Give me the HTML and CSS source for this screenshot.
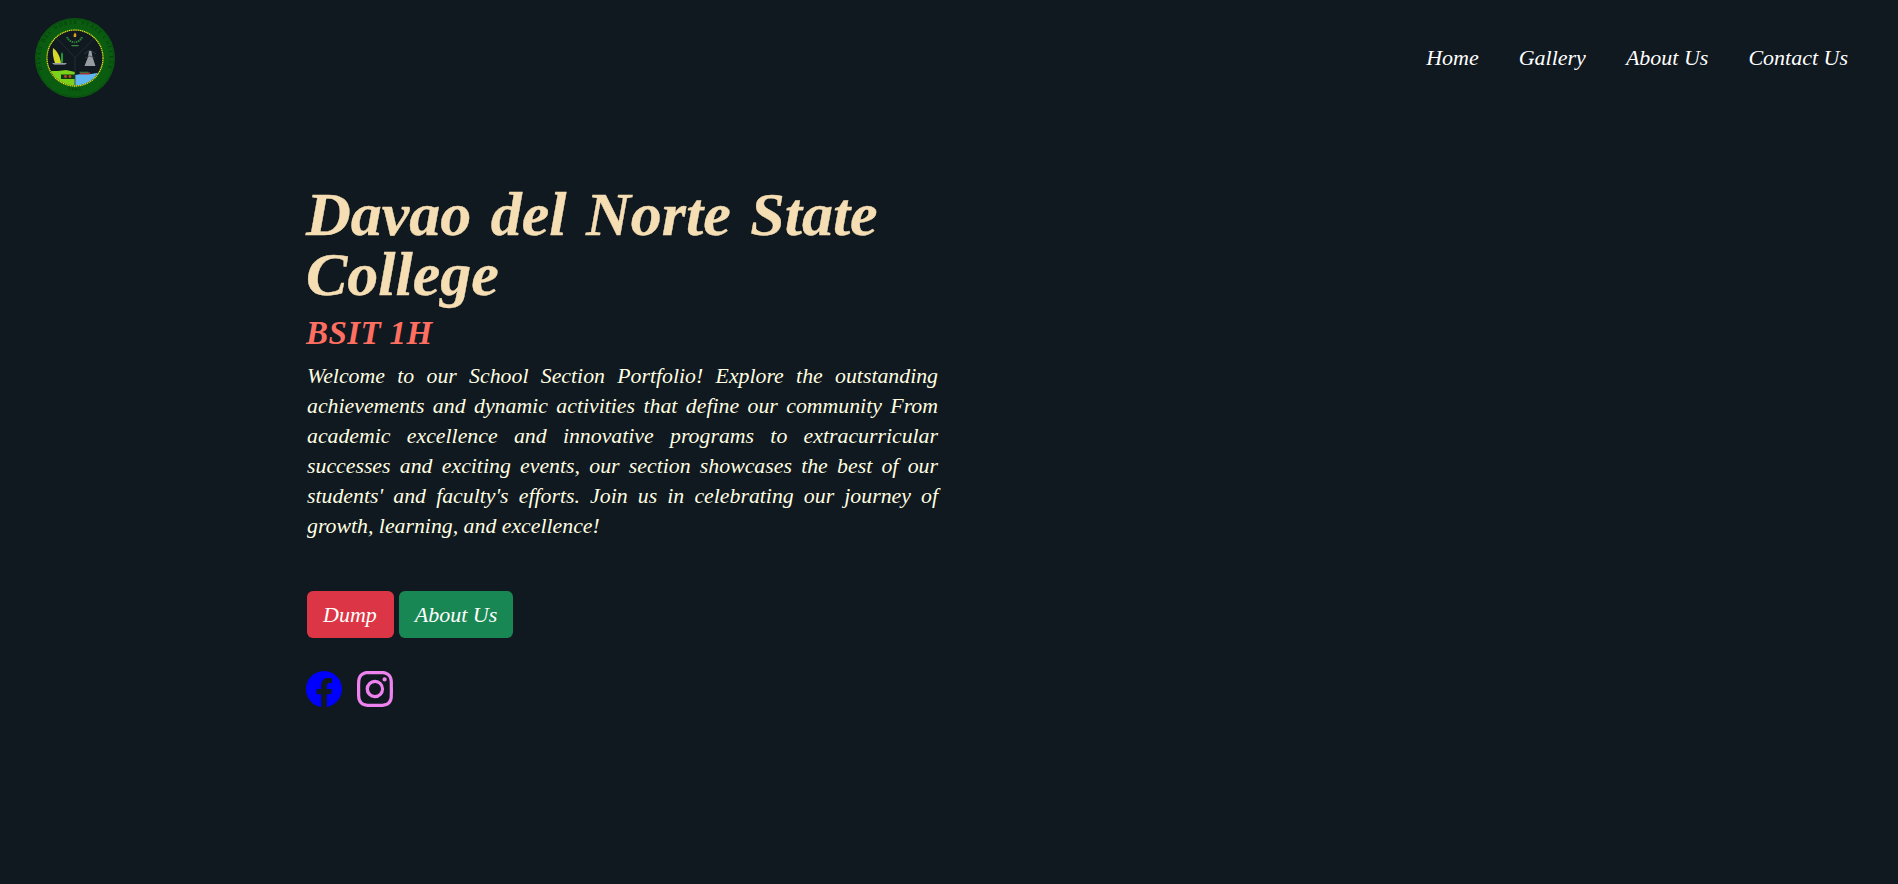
FILE: index.html
```html
<!DOCTYPE html>
<html lang="en">
<head>
<meta charset="utf-8">
<title>BSIT 1H Portfolio</title>
<link rel="stylesheet" href="styles.css">
</head>
<body>
<header class="topbar">
  <a class="logo" href="#" aria-label="Davao del Norte State College seal">
    <svg viewBox="0 0 80 80" width="80" height="80">
      <defs>
        <path id="seal-arc" d="M13.500 62.300a34.500 34.500 0 1 1 53 0"/>
        <path id="seal-arc-low" d="M16 64a36 36 0 0 0 48 0"/>
        <clipPath id="seal-clip"><circle cx="40" cy="40" r="27.500"/></clipPath>
      </defs>
      <circle cx="40" cy="40" r="40" fill="#0a5c10"/>
      <circle cx="40" cy="40" r="38.800" fill="none" stroke="#0b4a10" stroke-width=".8"/>
      <text class="seal-text"><textPath href="#seal-arc" startOffset="50%" text-anchor="middle">DAVAO DEL NORTE STATE COLLEGE</textPath></text>
      <text class="seal-year"><textPath href="#seal-arc-low" startOffset="50%" text-anchor="middle">1995</textPath></text>
      <circle cx="40" cy="40" r="28" fill="#101820"/>
      <g clip-path="url(#seal-clip)">
        <path d="M10 53h13l8-1 9 2v16H10z" fill="#7ad21a"/>
        <path d="M40 57l6-1h10l12-2v16H40z" fill="#5fb6ee"/>
        <path d="M44.500 54.500h11l-.8 2H45.500z" fill="#a53038"/>
        <path d="M44.500 53.800h9v1h-9z" fill="#2f8a3a"/>
        <path d="M26 56.500h14V61H26z" fill="#0d3a14"/>
        <circle cx="30.500" cy="58.500" r="1.400" fill="#c8452c"/>
        <circle cx="35" cy="58.500" r="1.400" fill="#c8452c"/>
        <path d="M40 39.500L20.500 19M40 39.500L59.500 20M40 39.500V70" stroke="#2a333c" stroke-width=".8" fill="none"/>
        <path d="M18 30c3 2 7 7 8 15h-6c-2-5-2.500-10-2-15z" fill="#d8d82a"/>
        <path d="M26 44.800V36l1-2 1 2v8.800z" fill="#1d9a34"/>
        <path d="M17 45.200h15l-2 1.300H19z" fill="#c5c8cc"/>
        <path d="M54 33l2.500 0 1 6 3 9h-11l3.500-9z" fill="#969ca2"/>
        <path d="M49 36l6-4 6 4M50 40l5-2 5 2" stroke="#3f464e" stroke-width=".7" fill="none"/>
        <path d="M32 19a8 8 0 0 0 15 0" fill="none" stroke="#2c8a35" stroke-width="2" stroke-dasharray="1.500 .7"/>
        <path d="M39.500 17h1.200l-.2 9h-.8z" fill="#20262c"/>
        <path d="M40 14.500c1.500 1.500 1.800 3 .8 4.500h-2c-.6-1.500 0-3 1.200-4.500z" fill="#e0a21c"/>
        <path d="M36 27h8l-1 1.200h-6z" fill="#3c8a3c"/>
      </g>
      <circle cx="40" cy="40" r="28" fill="none" stroke="#dfe01e" stroke-width="1.300" stroke-dasharray="1.300 .6"/>
    </svg>
  </a>
  <nav class="nav">
    <a href="#">Home</a>
    <a href="#">Gallery</a>
    <a href="#">About Us</a>
    <a href="#">Contact Us</a>
  </nav>
</header>
<main class="hero">
  <h1 class="title">Davao del Norte State College</h1>
  <h2 class="subtitle">BSIT 1H</h2>
  <p class="intro">
    <span class="line">Welcome to our School Section Portfolio! Explore the outstanding</span>
    <span class="line">achievements and dynamic activities that define our community From</span>
    <span class="line">academic excellence and innovative programs to extracurricular</span>
    <span class="line">successes and exciting events, our section showcases the best of our</span>
    <span class="line">students' and faculty's efforts. Join us in celebrating our journey of</span>
    <span class="line line-last">growth, learning, and excellence!</span>
  </p>
  <div class="actions">
    <a class="btn btn-red" href="#">Dump</a>
    <a class="btn btn-green" href="#">About Us</a>
  </div>
  <div class="socials">
    <a class="fb" href="#" aria-label="Facebook">
      <svg viewBox="0 0 16 16" width="36" height="36" fill="currentColor"><path d="M16 8.049c0-4.446-3.582-8.05-8-8.05C3.58 0-.002 3.603-.002 8.05c0 4.017 2.926 7.347 6.75 7.951v-5.625h-2.03V8.05H6.75V6.275c0-2.017 1.195-3.131 3.022-3.131.876 0 1.791.157 1.791.157v1.98h-1.009c-.993 0-1.303.621-1.303 1.258v1.51h2.218l-.354 2.326H9.25V16c3.824-.604 6.75-3.934 6.75-7.951"/></svg>
    </a>
    <a class="ig" href="#" aria-label="Instagram">
      <svg viewBox="0 0 16 16" width="36" height="36" fill="currentColor"><path d="M8 0C5.829 0 5.556.01 4.703.048 3.85.088 3.269.222 2.76.42a3.9 3.9 0 0 0-1.417.923A3.9 3.9 0 0 0 .42 2.76C.222 3.268.087 3.85.048 4.7.01 5.555 0 5.827 0 8.001c0 2.172.01 2.444.048 3.297.04.852.174 1.433.372 1.942.205.526.478.972.923 1.417.444.445.89.719 1.416.923.51.198 1.09.333 1.942.372C5.555 15.99 5.827 16 8 16s2.444-.01 3.298-.048c.851-.04 1.434-.174 1.943-.372a3.9 3.9 0 0 0 1.416-.923c.445-.445.718-.891.923-1.417.197-.509.332-1.09.372-1.942C15.99 10.445 16 10.173 16 8s-.01-2.445-.048-3.299c-.04-.851-.175-1.433-.372-1.941a3.9 3.9 0 0 0-.923-1.417A3.9 3.9 0 0 0 13.24.42c-.51-.198-1.092-.333-1.943-.372C10.443.01 10.172 0 7.998 0zm-.717 1.442h.718c2.136 0 2.389.007 3.232.046.78.035 1.204.166 1.486.275.373.145.64.319.92.599s.453.546.598.92c.11.281.24.705.275 1.485.039.843.047 1.096.047 3.231s-.008 2.389-.047 3.232c-.035.78-.166 1.203-.275 1.485a2.5 2.5 0 0 1-.599.919c-.28.28-.546.453-.92.598-.28.11-.704.24-1.485.276-.843.038-1.096.047-3.232.047s-2.39-.009-3.233-.047c-.78-.036-1.203-.166-1.485-.276a2.5 2.5 0 0 1-.92-.598 2.5 2.5 0 0 1-.6-.92c-.109-.281-.24-.705-.275-1.485-.038-.843-.046-1.096-.046-3.233s.008-2.388.046-3.231c.036-.78.166-1.204.276-1.486.145-.373.319-.64.599-.92s.546-.453.92-.598c.282-.11.705-.24 1.485-.276.738-.034 1.024-.044 2.515-.045zm4.988 1.328a.96.96 0 1 0 0 1.92.96.96 0 0 0 0-1.92m-4.27 1.122a4.109 4.109 0 1 0 0 8.217 4.109 4.109 0 0 0 0-8.217m0 1.441a2.667 2.667 0 1 1 0 5.334 2.667 2.667 0 0 1 0-5.334"/></svg>
    </a>
  </div>
</main>
</body>
</html>
```

FILE: styles.css
```css
* { box-sizing: border-box; }
html, body { margin: 0; height: 100%; }
body {
  background: #101820;
  font-family: "Liberation Serif", "Times New Roman", serif;
  font-style: italic;
  color: #fff;
  overflow: hidden;
}
a { text-decoration: none; color: inherit; }

.topbar {
  display: flex;
  justify-content: space-between;
  align-items: center;
  padding: 18px 50px 0 35px;
}
.logo { display: block; width: 80px; height: 80px; }
.logo svg { display: block; }
.seal-text { font: 5px "Liberation Serif", serif; fill: #04300a; letter-spacing: 1.6px; }
.seal-year { font: 5px "Liberation Serif", serif; fill: #04300a; letter-spacing: 1px; }

.nav { display: flex; gap: 40px; font-size: 22px; }

.hero {
  width: 631px;
  margin-left: 307px;
  padding-top: 86px;
}
.title {
  margin: 0 0 0 -1px;
  font-size: 62px;
  line-height: 60px;
  font-weight: 700;
  word-spacing: 4px;
  -webkit-text-stroke: .4px #f5deb3;
  color: #f5deb3;
}
.subtitle {
  margin: 9px 0 0 -1px;
  font-size: 33px;
  line-height: 40px;
  font-weight: 700;
  letter-spacing: .4px;
  color: #ff6f61;
}
.intro {
  margin: 8px 0 0;
  font-size: 21.8px;
  line-height: 30px;
  color: #ffffe0;
}
.line {
  display: block;
  text-align: justify;
  text-align-last: justify;
}
.line-last { text-align-last: left; }
.actions { display: flex; gap: 5px; margin-top: 50px; }
.btn {
  display: block;
  height: 47px;
  padding: 0 16px;
  border-radius: 6px;
  font-size: 22px;
  line-height: 47px;
  color: #fff;
}
.btn-red { background: #dc3545; padding: 0 17px 0 16px; }
.btn-green { background: #198754; }

.socials { display: flex; gap: 15px; margin: 33px 0 0 -1px; }
.socials a { display: block; width: 36px; height: 36px; }
.socials svg { display: block; }
.fb { color: #0000ff; }
.ig { color: #ee82ee; }
```
